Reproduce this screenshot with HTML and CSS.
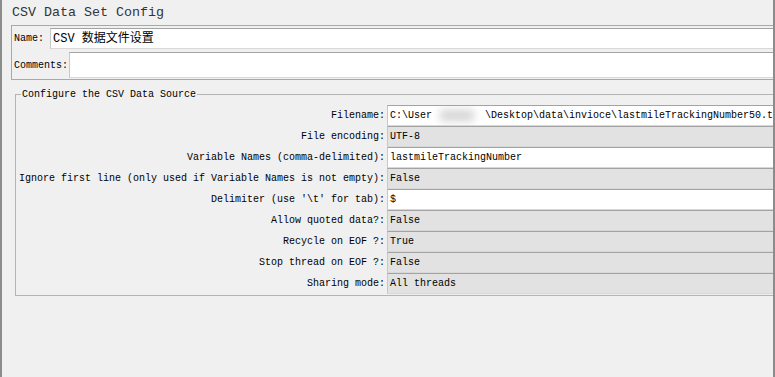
FILE: index.html
```html
<!DOCTYPE html>
<html lang="en">
<head>
  <meta charset="UTF-8">
  <title>CSV Data Set Config</title>
  <link rel="stylesheet" href="styles.css">
</head>
<body>

<div class="frame">
  <div class="title">CSV Data Set Config</div>

  <div class="name-box">
    <div class="name-row">
      <label>Name:</label>
      <div class="field white">CSV 数据文件设置</div>
    </div>
    <div class="comment-row">
      <label>Comments:</label>
      <div class="field white tall"></div>
    </div>
  </div>

  <fieldset class="source">
    <legend>Configure the CSV Data Source</legend>
    <div class="grid">
      <label>Filename:</label>
      <div class="field white">C:\User<span class="blur"><span></span></span>\Desktop\data\invioce\lastmileTrackingNumber50.tx</div>

      <label>File encoding:</label>
      <div class="field">UTF-8</div>

      <label>Variable Names (comma-delimited):</label>
      <div class="field white">lastmileTrackingNumber</div>

      <label>Ignore first line (only used if Variable Names is not empty):</label>
      <div class="field">False</div>

      <label>Delimiter (use '\t' for tab):</label>
      <div class="field white">$</div>

      <label>Allow quoted data?:</label>
      <div class="field">False</div>

      <label>Recycle on EOF ?:</label>
      <div class="field">True</div>

      <label>Stop thread on EOF ?:</label>
      <div class="field">False</div>

      <label>Sharing mode:</label>
      <div class="field">All threads</div>
    </div>
  </fieldset>
</div>

</body>
</html>
```

FILE: styles.css
```css
body {
  margin: 0;
  background: #f0f0f0;
  font-family: "Liberation Mono", "Noto Sans CJK SC", monospace;
  color: #000;
}

.frame {
  width: 771px;
  height: 377px;
  border-left: 2px solid #8c8c8c;
  border-right: 2px solid #8c8c8c;
  overflow: hidden;
}

.title {
  font-size: 13.33px;
  height: 25px;
  line-height: 25px;
  padding-left: 10px;
  color: #333;
}

.name-box {
  margin-left: 9px;
  border: 1px solid #a8a8a8;
  border-right: none;
  padding: 2px 0 1px 2px;
  font-size: 10px;
}

.name-row,
.comment-row {
  display: flex;
  align-items: center;
  gap: 6px;
}

.comment-row {
  gap: 1px;
  margin-top: 3px;
}

.field {
  flex: 1;
  height: 20px;
  line-height: 20px;
  box-sizing: border-box;
  padding-left: 2px;
  background: #e2e2e2;
  border-top: 1px solid #a3a3a3;
  border-left: 1px solid #c8c8c8;
  border-bottom: 1px solid #d8d8d8;
  font-size: 10px;
  white-space: nowrap;
  overflow: hidden;
}

.name-row .field {
  font-size: 12px;
  height: 21px;
  line-height: 20px;
}

.field.white {
  background: #fff;
}

.field.tall {
  height: 26px;
}

.source {
  margin: 9px 0 0 13px;
  padding: 3px 0 1px 3px;
  border: 1px solid #b4b4b4;
  border-right: none;
  font-size: 10px;
}

.source legend {
  padding: 0 1px;
  margin-left: 2px;
}

.grid {
  display: grid;
  grid-template-columns: auto 1fr;
  grid-auto-rows: 21px;
  column-gap: 2px;
  margin-top: 2px;
}

.grid label {
  text-align: right;
  line-height: 21px;
  white-space: nowrap;
}

.grid .field {
  height: 21px;
  line-height: 20px;
}

.blur {
  display: inline-block;
  width: 53px;
  height: 14px;
  vertical-align: middle;
  position: relative;
}

.blur span {
  position: absolute;
  left: 8px;
  top: 2px;
  width: 34px;
  height: 11px;
  background: #d4d4d4;
  filter: blur(4px);
}
```
